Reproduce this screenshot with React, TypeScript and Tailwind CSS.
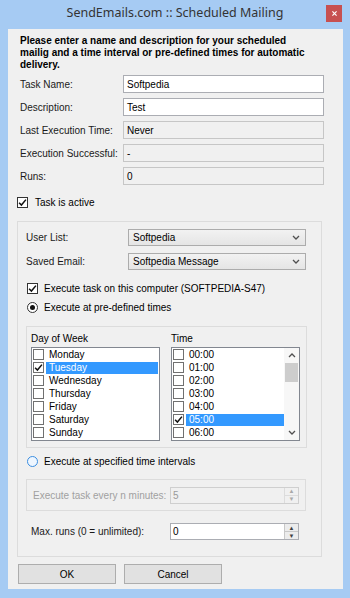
import React from 'react'

const days = ['Monday', 'Tuesday', 'Wednesday', 'Thursday', 'Friday', 'Saturday', 'Sunday']
const times = ['00:00', '01:00', '02:00', '03:00', '04:00', '05:00', '06:00']

const Tick = () => (
  <svg viewBox="0 0 10 10" className="h-[9px] w-[9px]">
    <path d="M1.2 5.2 L3.8 7.8 L8.8 1.8" fill="none" stroke="#111" strokeWidth="1.7" />
  </svg>
)

const CheckBox = ({ checked = false, dark = true }: { checked?: boolean; dark?: boolean }) => (
  <span
    className={`flex h-[11px] w-[11px] shrink-0 items-center justify-center border bg-white ${
      dark ? 'border-[#333333]' : 'border-[#707070]'
    }`}
  >
    {checked && <Tick />}
  </span>
)

const Chevron = ({ up = false }: { up?: boolean }) => (
  <svg viewBox="0 0 8 5" className="h-[5px] w-[8px]">
    <path d={up ? 'M1 4 L4 1 L7 4' : 'M1 1 L4 4 L7 1'} fill="none" stroke="#505050" strokeWidth="1.3" />
  </svg>
)

const Spin = ({ value, disabled = false }: { value: string; disabled?: boolean }) => (
  <div
    className={`flex h-[17px] w-[129px] items-stretch border ${
      disabled ? 'border-[#cfcfcf] bg-[#f0f0f0] text-[#9a9a9a]' : 'border-[#abadb3] bg-white text-black'
    }`}
  >
    <span className="flex-1 pl-[2px] leading-[15px]">{value}</span>
    <div className="flex w-[14px] flex-col">
      <span
        className={`flex flex-1 items-center justify-center border-b border-l ${
          disabled ? 'border-[#dcdcdc] text-[#a8a8a8]' : 'border-[#c8c8c8] bg-[#ececec] text-[#404040]'
        } text-[6px] leading-none`}
      >
        ▲
      </span>
      <span
        className={`flex flex-1 items-center justify-center border-l ${
          disabled ? 'border-[#dcdcdc] text-[#a8a8a8]' : 'border-[#c8c8c8] bg-[#ececec] text-[#404040]'
        } text-[6px] leading-none`}
      >
        ▼
      </span>
    </div>
  </div>
)

const Combo = ({ value }: { value: string }) => (
  <div className="flex h-[17px] w-[178px] items-center border border-[#acacac] bg-gradient-to-b from-[#f2f2f2] to-[#e5e5e5] pl-[4px] pr-[5px]">
    <span className="flex-1">{value}</span>
    <Chevron />
  </div>
)

const Field = ({ label, value, readOnly = false }: { label: string; value: string; readOnly?: boolean }) => (
  <div className="flex h-[18px] items-center">
    <span className="w-[103px] text-[#1a1a1a]">{label}</span>
    <div
      className={`flex h-[18px] w-[201px] items-center border pl-[3px] ${
        readOnly ? 'border-[#c6c6c6] bg-[#f0f0f0]' : 'border-[#abadb3] bg-white'
      }`}
    >
      {value}
    </div>
  </div>
)

const Radio = ({ checked = false, hover = false }: { checked?: boolean; hover?: boolean }) => (
  <span
    className={`flex h-[11px] w-[11px] shrink-0 items-center justify-center rounded-full border ${
      hover ? 'border-[#3c8ee0] bg-[#eef6ff]' : 'border-[#333333] bg-white'
    }`}
  >
    {checked && <span className="h-[5px] w-[5px] rounded-full bg-[#111]" />}
  </span>
)

export default function App() {
  return (
    <div className="flex h-[598px] w-[350px] flex-col bg-[#a6cbf3] font-['Liberation_Sans',Arial,sans-serif] text-[10px] text-black">
      {/* title bar */}
      <div className="relative flex h-[29px] items-center justify-center">
        <span className="pb-[2px] font-['Noto_Sans',sans-serif] text-[12.5px] text-[#333]">
          SendEmails.com :: Scheduled Mailing
        </span>
        <div className="absolute right-[8px] top-[5px] flex h-[17px] w-[16px] items-center justify-center bg-[#c75050]">
          <svg viewBox="0 0 6 6" className="h-[5px] w-[5px]">
            <path d="M0.5 0.5 L5.5 5.5 M5.5 0.5 L0.5 5.5" stroke="white" strokeWidth="1.4" />
          </svg>
        </div>
      </div>

      {/* client area */}
      <div className="ml-[8px] flex h-[560px] w-[335px] flex-col bg-[#f0f0f0] pl-[12px] pt-[6px]">
        <p className="font-bold leading-[12px]">
          Please enter a name and description for your scheduled
          <br />
          mailig and a time interval or pre-defined times for automatic
          <br />
          delivery.
        </p>

        <div className="mt-[4px] flex flex-col gap-[5px]">
          <Field label="Task Name:" value="Softpedia" />
          <Field label="Description:" value="Test" />
          <Field label="Last Execution Time:" value="Never" readOnly />
          <Field label="Execution Successful:" value="-" readOnly />
          <Field label="Runs:" value="0" readOnly />
        </div>

        <div className="-ml-[3px] mt-[11px] flex h-[13px] items-center gap-[7px]">
          <CheckBox checked />
          <span>Task is active</span>
        </div>

        {/* schedule panel */}
        <div className="-ml-[3px] mt-[12px] flex h-[336px] w-[305px] flex-col border border-[#dcdcdc] pl-[8px] pt-[7px]">
          <div className="flex flex-col gap-[7px]">
            <div className="flex items-center">
              <span className="w-[102px] text-[#1a1a1a]">User List:</span>
              <Combo value="Softpedia" />
            </div>
            <div className="flex items-center">
              <span className="w-[102px] text-[#1a1a1a]">Saved Email:</span>
              <Combo value="Softpedia Message" />
            </div>
          </div>

          <div className="ml-[1px] mt-[12px] flex h-[13px] items-center gap-[6px]">
            <CheckBox checked />
            <span>Execute task on this computer (SOFTPEDIA-S47)</span>
          </div>
          <div className="ml-[1px] mt-[6px] flex h-[13px] items-center gap-[6px]">
            <Radio checked />
            <span>Execute at pre-defined times</span>
          </div>

          {/* day / time group */}
          <div className="mt-[12px] flex h-[122px] w-[281px] gap-[11px] border border-[#dcdcdc] pl-[4px] pt-[5px]">
            <div className="flex flex-col">
              <span className="h-[13px] leading-[13px]">Day of Week</span>
              <div className="mt-[2px] flex h-[94px] w-[129px] flex-col border border-[#828790] bg-white">
                {days.map((d) => (
                  <div key={d} className="flex h-[13px] items-center pl-[1px]">
                    <CheckBox checked={d === 'Tuesday'} dark={false} />
                    <span
                      className={`ml-[2px] flex h-[12px] flex-1 items-center pl-[3px] ${
                        d === 'Tuesday' ? 'mr-[1px] bg-[#3399ff] text-white' : ''
                      }`}
                    >
                      {d}
                    </span>
                  </div>
                ))}
              </div>
            </div>
            <div className="flex flex-col">
              <span className="h-[13px] leading-[13px]">Time</span>
              <div className="mt-[2px] flex h-[94px] w-[129px] border border-[#828790] bg-white">
                <div className="flex flex-1 flex-col">
                  {times.map((t) => (
                    <div key={t} className="flex h-[13px] items-center pl-[1px]">
                      <CheckBox checked={t === '05:00'} dark={false} />
                      <span
                        className={`ml-[2px] flex h-[12px] flex-1 items-center pl-[3px] ${
                          t === '05:00' ? 'bg-[#3399ff] text-white' : ''
                        }`}
                      >
                        {t}
                      </span>
                    </div>
                  ))}
                </div>
                <div className="flex w-[15px] flex-col items-center bg-[#f7f7f7]">
                  <div className="flex h-[15px] items-center justify-center">
                    <Chevron up />
                  </div>
                  <div className="h-[19px] w-[13px] bg-[#cdcdcd]" />
                  <div className="flex-1" />
                  <div className="flex h-[15px] items-center justify-center">
                    <Chevron />
                  </div>
                </div>
              </div>
            </div>
          </div>

          <div className="ml-[1px] mt-[7px] flex h-[13px] items-center gap-[6px]">
            <Radio hover />
            <span>Execute at specified time intervals</span>
          </div>

          <div className="mt-[11px] flex h-[32px] w-[280px] items-center border border-[#dcdcdc] pl-[6px]">
            <span className="w-[137px] text-[#a0a0a0]">Execute task every n minutes:</span>
            <Spin value="5" disabled />
          </div>

          <div className="mt-[12px] flex items-center pl-[5px]">
            <span className="w-[139px] text-[#1a1a1a]">Max. runs (0 = unlimited):</span>
            <Spin value="0" />
          </div>
        </div>

        <div className="-ml-[2px] mt-[7px] flex gap-[8px]">
          <button className="h-[20px] w-[98px] border border-[#adadad] bg-[#e1e1e1]">OK</button>
          <button className="h-[20px] w-[98px] border border-[#adadad] bg-[#e1e1e1]">Cancel</button>
        </div>
      </div>
    </div>
  )
}
